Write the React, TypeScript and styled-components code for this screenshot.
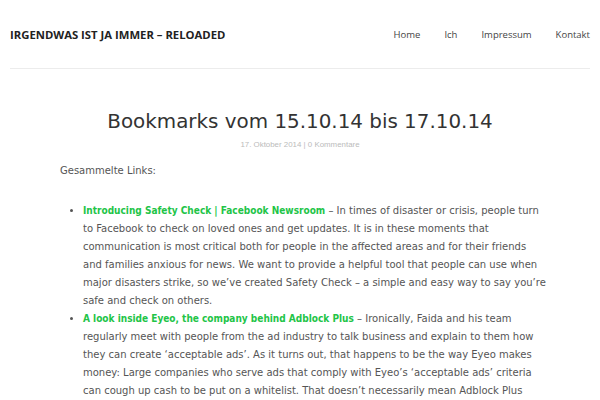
import React from 'react';
import styled, { createGlobalStyle } from 'styled-components';

const GlobalStyle = createGlobalStyle`
  html, body {
    margin: 0;
    padding: 0;
    background: #fff;
  }
  body {
    font-family: 'DejaVu Sans', sans-serif;
  }
`;

const Page = styled.div`
  width: 600px;
  padding: 0 10px;
  box-sizing: border-box;
`;

const Header = styled.header`
  display: flex;
  align-items: center;
  justify-content: space-between;
  height: 68px;
  border-bottom: 1px solid #ececec;
`;

const SiteTitle = styled.a`
  font-family: 'Open Sans', sans-serif;
  font-weight: 700;
  font-size: 11.3px;
  color: #222;
  text-decoration: none;
`;

const Nav = styled.nav`
  display: flex;
  gap: 24px;
`;

const NavLink = styled.a`
  font-family: 'Open Sans', sans-serif;
  font-size: 9.5px;
  color: #444;
  text-decoration: none;
`;

const Article = styled.article`
  width: 480px;
  margin: 0 auto;
  padding-top: 39px;
  color: #555;
`;

const Title = styled.h1`
  margin: 0;
  text-align: center;
  font-family: 'DejaVu Sans', sans-serif;
  font-weight: 400;
  font-size: 19.9px;
  line-height: 28px;
  color: #333;
`;

const Meta = styled.div`
  margin-top: 4px;
  text-align: center;
  font-family: 'Liberation Sans', Arial, sans-serif;
  font-size: 7.9px;
  color: #bbb;
`;

const Paragraph = styled.p`
  margin: 13px 0 22px;
  font-size: 10px;
  line-height: 18px;
`;

const List = styled.ul`
  margin: 0 -8px 0 0;
  padding-left: 23px;
  font-size: 10px;
  line-height: 18px;
`;

const Item = styled.li`
  margin: 0;
`;

const Link = styled.a`
  font-family: 'DejaVu Sans Condensed', 'DejaVu Sans', sans-serif;
  font-stretch: semi-condensed;
  color: #22c447;
  font-weight: 700;
  text-decoration: none;
`;

const navItems = ['Home', 'Ich', 'Impressum', 'Kontakt'];

export default function App() {
  return (
    <>
      <GlobalStyle />
      <Page>
        <Header>
          <SiteTitle href="#">IRGENDWAS IST JA IMMER – RELOADED</SiteTitle>
          <Nav>
            {navItems.map(n => (
              <NavLink key={n} href="#">
                {n}
              </NavLink>
            ))}
          </Nav>
        </Header>
        <Article>
          <Title>Bookmarks vom 15.10.14 bis 17.10.14</Title>
          <Meta>17. Oktober 2014 | 0 Kommentare</Meta>
          <Paragraph>Gesammelte Links:</Paragraph>
          <List>
            <Item>
              <Link href="#">Introducing Safety Check | Facebook Newsroom</Link> – In times of disaster
              or crisis, people turn to Facebook to check on loved ones and get updates. It is in
              these moments that communication is most critical both for people in the affected
              areas and for their friends and families anxious for news. We want to provide a
              helpful tool that people can use when major disasters strike, so we’ve created Safety
              Check – a simple and easy way to say you’re safe and check on others.
            </Item>
            <Item>
              <Link href="#">A look inside Eyeo, the company behind Adblock Plus</Link> – Ironically,
              Faida and his team regularly meet with people from the ad industry to talk business
              and explain to them how they can create ‘acceptable ads’. As it turns out, that
              happens to be the way Eyeo makes money: Large companies who serve ads that comply
              with Eyeo’s ‘acceptable ads’ criteria can cough up cash to be put on a whitelist. That
              doesn’t necessarily mean Adblock Plus shows ads.
            </Item>
          </List>
        </Article>
      </Page>
    </>
  );
}
